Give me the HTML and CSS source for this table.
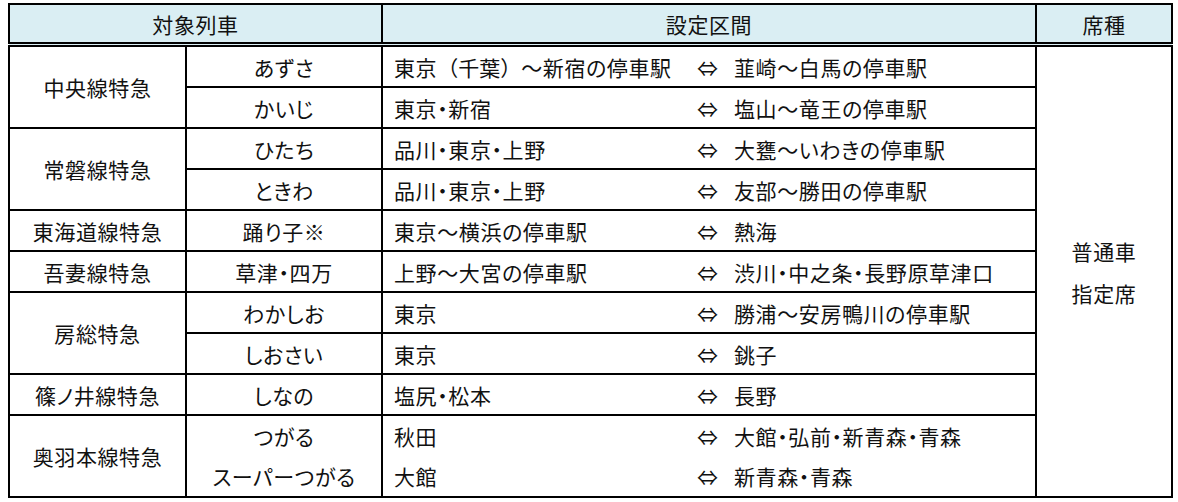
FILE: index.html
```html
<!DOCTYPE html>
<html lang="ja">
<head>
<meta charset="utf-8">
<link rel="stylesheet" href="styles.css">
</head>
<body>
<table class="tbl">
  <colgroup>
    <col class="c1"><col class="c2"><col class="c3"><col class="c4">
  </colgroup>
  <thead>
    <tr class="head">
      <th colspan="2">対象列車</th>
      <th>設定区間</th>
      <th>席種</th>
    </tr>
  </thead>
  <tbody>
    <tr>
      <td class="line" rowspan="2">中央線特急</td>
      <td class="train">あずさ</td>
      <td class="sec"><div class="route"><span class="from">東京<span class="fw">（千葉）</span>～新宿の停車駅</span><span class="arr">⇔</span><span class="to">韮崎～白馬の停車駅</span></div></td>
      <td class="seat" rowspan="10">普通車<br>指定席</td>
    </tr>
    <tr>
      <td class="train">かいじ</td>
      <td class="sec"><div class="route"><span class="from">東京・新宿</span><span class="arr">⇔</span><span class="to">塩山～竜王の停車駅</span></div></td>
    </tr>
    <tr>
      <td class="line" rowspan="2">常磐線特急</td>
      <td class="train">ひたち</td>
      <td class="sec"><div class="route"><span class="from">品川・東京・上野</span><span class="arr">⇔</span><span class="to">大甕～いわきの停車駅</span></div></td>
    </tr>
    <tr>
      <td class="train">ときわ</td>
      <td class="sec"><div class="route"><span class="from">品川・東京・上野</span><span class="arr">⇔</span><span class="to">友部～勝田の停車駅</span></div></td>
    </tr>
    <tr>
      <td class="line">東海道線特急</td>
      <td class="train">踊り子※</td>
      <td class="sec"><div class="route"><span class="from">東京～横浜の停車駅</span><span class="arr">⇔</span><span class="to">熱海</span></div></td>
    </tr>
    <tr>
      <td class="line">吾妻線特急</td>
      <td class="train">草津・四万</td>
      <td class="sec"><div class="route"><span class="from">上野～大宮の停車駅</span><span class="arr">⇔</span><span class="to">渋川・中之条・長野原草津口</span></div></td>
    </tr>
    <tr>
      <td class="line" rowspan="2">房総特急</td>
      <td class="train">わかしお</td>
      <td class="sec"><div class="route"><span class="from">東京</span><span class="arr">⇔</span><span class="to">勝浦～安房鴨川の停車駅</span></div></td>
    </tr>
    <tr>
      <td class="train">しおさい</td>
      <td class="sec"><div class="route"><span class="from">東京</span><span class="arr">⇔</span><span class="to">銚子</span></div></td>
    </tr>
    <tr>
      <td class="line">篠ノ井線特急</td>
      <td class="train">しなの</td>
      <td class="sec"><div class="route"><span class="from">塩尻・松本</span><span class="arr">⇔</span><span class="to">長野</span></div></td>
    </tr>
    <tr class="double">
      <td class="line">奥羽本線特急</td>
      <td class="train">つがる<br>スーパーつがる</td>
      <td class="sec">
        <div class="route"><span class="from">秋田</span><span class="arr">⇔</span><span class="to">大館・弘前・新青森・青森</span></div>
        <div class="route"><span class="from">大館</span><span class="arr">⇔</span><span class="to">新青森・青森</span></div>
      </td>
    </tr>
  </tbody>
</table>
</body>
</html>
```

FILE: styles.css
```css
html, body {
  margin: 0;
  padding: 0;
  background: #ffffff;
}

body {
  padding: 3px 0 0 8px;
  font-family: "Noto Sans CJK JP", "Noto Sans", sans-serif;
  color: #111111;
}

.tbl {
  border-collapse: collapse;
  table-layout: fixed;
  width: 1163px;
  font-size: 21px;
  line-height: 34px;
  letter-spacing: 0.6px;
  font-feature-settings: "palt";
}

.c1 { width: 177px; }
.c2 { width: 196px; }
.c3 { width: 654px; }
.c4 { width: 136px; }

.tbl th,
.tbl td {
  border: 2px solid #000;
  padding: 0;
  font-weight: 400;
  vertical-align: middle;
}

.head th {
  background: #daeef3;
  height: 37px;
  text-align: center;
  border-bottom: 5px double #000;
}

.tbl td {
  height: 39px;
}

.line,
.train,
.seat {
  text-align: center;
}

.sec {
  padding-left: 11px !important;
}

.fw {
  font-feature-settings: normal;
  letter-spacing: 0;
}

.route {
  display: flex;
  align-items: center;
  height: 39px;
}

.double td {
  height: 80px;
}

.double .route {
  height: 40px;
}

.double .train {
  line-height: 40px;
}

.from {
  width: 303px;
  flex: none;
}

.arr {
  width: 37px;
  flex: none;
  letter-spacing: 0;
}

.seat {
  line-height: 42px;
}
```
